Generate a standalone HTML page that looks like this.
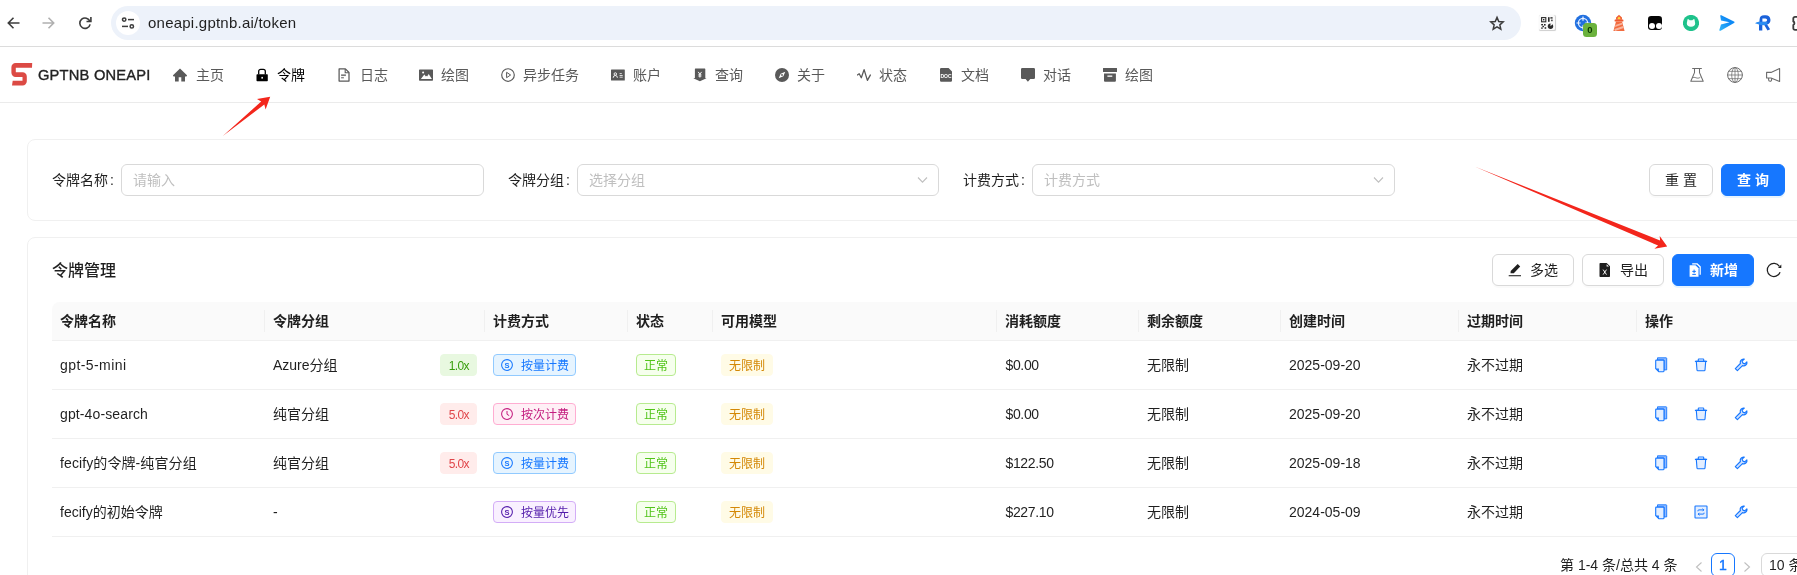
<!DOCTYPE html>
<html lang="zh-CN">
<head>
<meta charset="utf-8">
<title>令牌管理</title>
<style>
*{box-sizing:border-box}
html,body{margin:0;padding:0}
body{width:1797px;height:575px;overflow:hidden;position:relative;background:#fff;font-family:"Liberation Sans","Noto Sans CJK SC",sans-serif;font-size:14px;color:rgba(0,0,0,.88)}
.abs{position:absolute}
/* browser chrome */
#chrome{position:absolute;left:0;top:0;width:1797px;height:47px;background:#fff;border-bottom:1px solid #dcdcdc}
#omni{position:absolute;left:111px;top:6px;width:1410px;height:34px;border-radius:17px;background:#edf2fa}
#omni .site{position:absolute;left:5px;top:5px;width:24px;height:24px;border-radius:12px;background:#fff}
#omni .url{position:absolute;left:37px;top:0;line-height:34px;font-size:15px;letter-spacing:.23px;color:#1f1f1f;white-space:nowrap}
/* nav */
#nav{position:absolute;left:0;top:47px;width:1797px;height:56px;border-bottom:1px solid #ebebeb;background:#fff}
#brand{position:absolute;left:38px;top:0;line-height:56px;font-size:14.7px;font-weight:400;-webkit-text-stroke:.35px #222;color:#222;letter-spacing:.2px;white-space:nowrap}
.ni{position:absolute;top:0;height:56px;line-height:56px;font-size:14px;color:#595959;white-space:nowrap}
.ni.on{color:#000}
.nic{position:absolute;top:0;height:56px}
/* cards */
.card{position:absolute;left:27px;width:1800px;border:1px solid #f0f0f0;border-radius:8px;background:#fff}
.lbl{position:absolute;line-height:32px;top:164px;font-size:14px;color:rgba(0,0,0,.88);white-space:nowrap}
.inp{position:absolute;top:164px;height:32px;border:1px solid #d9d9d9;border-radius:6px;background:#fff;line-height:30px;padding-left:11px;color:#bfbfbf;font-size:14px;white-space:nowrap}
.btn{position:absolute;height:32px;border-radius:6px;border:1px solid #d9d9d9;background:#fff;line-height:30px;font-size:14px;color:rgba(0,0,0,.88);white-space:nowrap;box-shadow:0 2px 0 rgba(0,0,0,.02)}
.btn.pri{background:#1677ff;border-color:#1677ff;color:#fff;font-weight:700;box-shadow:0 2px 0 rgba(5,145,255,.1)}
/* table */
#thead{position:absolute;left:52px;top:302px;width:1760px;height:39px;background:#fafafa;border-bottom:1px solid #f0f0f0;border-top-left-radius:8px}
.th{position:absolute;top:302px;line-height:38px;font-weight:600;font-size:14px;color:rgba(0,0,0,.88);white-space:nowrap}
.sep{position:absolute;top:310px;width:1px;height:22px;background:#f0f0f0}
.rowline{position:absolute;left:52px;width:1760px;height:1px;background:#f0f0f0}
.td{position:absolute;line-height:22px;font-size:14px;color:rgba(0,0,0,.88);white-space:nowrap}
.tag{position:absolute;height:22px;line-height:22px;font-size:12px;border-radius:4px;border:1px solid;white-space:nowrap;padding:0 7px}
#root{position:absolute;left:0;top:0;width:1797px;height:575px;overflow:hidden;will-change:transform}
</style>
</head>
<body>
<div id="root">
<div id="chrome">
<svg class="abs" style="left:3.7px;top:13px" width="20" height="20" viewBox="0 0 20 20" ><path d="M15.5 10H4.5M9.5 4.8L4.3 10l5.2 5.2" fill="none" stroke="#3c3c3c" stroke-width="1.6"/></svg>
<svg class="abs" style="left:38px;top:13px" width="20" height="20" viewBox="0 0 20 20" ><path d="M4.5 10h11M10.5 4.8l5.2 5.2-5.2 5.2" fill="none" stroke="#b0b0b0" stroke-width="1.6"/></svg>
<svg class="abs" style="left:75px;top:13px" width="20" height="20" viewBox="0 0 20 20" ><path d="M14.9 8.4A5.2 5.2 0 1 0 15.1 11.3" fill="none" stroke="#3c3c3c" stroke-width="1.6"/><path d="M15.9 4.1V8.5H11.5" fill="none" stroke="#3c3c3c" stroke-width="1.6"/></svg>
<div id="omni"><div class="site"></div>
<svg class="abs" style="left:9px;top:9px" width="16" height="16" viewBox="0 0 16 16" ><g fill="none" stroke="#3c3c3c" stroke-width="1.5"><circle cx="4.2" cy="4.6" r="1.7"/><path d="M8 4.6h6"/><circle cx="11.8" cy="11.4" r="1.7"/><path d="M2 11.4h6"/></g></svg>
<div class="url">oneapi.gptnb.ai/token</div>
<svg class="abs" style="left:0px;top:0px" width="1410" height="34" viewBox="0 0 1410 34" ><path d="M1386.00 11.4 L1387.76 15.47 L1392.18 15.89 L1388.85 18.83 L1389.82 23.16 L1386.00 20.9 L1382.18 23.16 L1383.15 18.83 L1379.82 15.89 L1384.24 15.47z" fill="none" stroke="#3c3c3c" stroke-width="1.5" stroke-linejoin="miter"/></svg>
</div>
<div class="abs" style="left:1539px;top:15px;width:15.5px;height:15px;border-radius:1.5px;background:#fafafa;box-shadow:.3px .5px .8px #cfcfcf"></div>
<svg class="abs" style="left:1539px;top:15px" width="16" height="16" viewBox="0 0 16 16" ><g fill="none" stroke="#2a2a2a" stroke-width="1.1"><rect x="2.6" y="2.6" width="4.2" height="4.2"/></g><g fill="#2a2a2a"><rect x="4" y="4" width="1.4" height="1.4"/><rect x="9" y="2.2" width="1.6" height="4.6"/><rect x="11.4" y="2.2" width="2.2" height="1.4"/><rect x="12.2" y="4.6" width="1.4" height="1.6"/><rect x="2.2" y="9" width="1.8" height="1.4"/><rect x="5" y="9" width="1.6" height="1.6"/><rect x="3.4" y="10.8" width="1.6" height="1.4"/><rect x="2.2" y="12.4" width="1.5" height="1.4"/><rect x="5.6" y="12.2" width="1.6" height="1.6"/><circle cx="11.5" cy="11.3" r="2.7"/></g><path d="M11.5 11.3V8.3h3.2z" fill="#fafafa"/></svg>
<svg class="abs" style="left:1574px;top:14px" width="18" height="18" viewBox="0 0 18 18" ><circle cx="9" cy="9" r="8.2" fill="#2170e0"/><circle cx="9" cy="9" r="4.6" fill="none" stroke="#eaf2ff" stroke-width="1.2"/><path d="M9 2.5v4.2M9 11.3v4.2M2.5 9h4.2M11.3 9h4.2" stroke="#eaf2ff" stroke-width="1.2"/></svg>
<div class="abs" style="left:1583px;top:23px;width:14px;height:14px;border-radius:3.5px;background:#6bb23d;color:#0c3a00;font-size:9.5px;font-weight:700;line-height:14.5px;text-align:center">0</div>
<svg class="abs" style="left:1612px;top:14px" width="14" height="18" viewBox="0 0 14 18" ><path d="M4 3.6L7 .8l3 2.8v2.2H4z" fill="#f1653a"/><circle cx="7" cy="4.2" r="1.2" fill="#ffd83a"/><rect x="2.6" y="5.6" width="8.8" height="2" rx=".5" fill="#ee5a32"/><path d="M4 7.6h6L12.6 17H1.4z" fill="#f26b3f"/><path d="M3.5 10.9l6.4-2.1.5 1.8-7.4 2.5zM2.3 15l8.9-3 .6 1.9-8.8 3z" fill="#f8b39c"/></svg>
<div class="abs" style="left:1648px;top:16px;width:14px;height:14px;border-radius:3.2px;background:#050505"></div>
<div class="abs" style="left:1649.3px;top:23.4px;width:6px;height:6px;border-radius:3px;background:#fff"></div><div class="abs" style="left:1655.5px;top:23.4px;width:6px;height:6px;border-radius:3px;background:#fff"></div>
<svg class="abs" style="left:1683px;top:15px" width="16" height="16" viewBox="0 0 16 16" ><circle cx="8" cy="8" r="8.1" fill="#1ec28b"/><path d="M4.5 4.6q.2-.9 1-.3l1.2 1h2.6l1.2-1q.8-.6 1 .3l.7 3.7a4.2 3.4 0 0 1-8.4 0z" fill="#f4fffb"/></svg>
<svg class="abs" style="left:1719px;top:15px" width="16" height="16" viewBox="0 0 16 16" ><defs><linearGradient id="sg" x1="0" y1="1" x2="1" y2="0"><stop offset="0" stop-color="#34b8f8"/><stop offset=".6" stop-color="#0f8af5"/></linearGradient></defs><path d="M2.3.2L15 6.5q1 .7 0 1.5L1.6 15.7q-1.4.6-1.2-.9L2 9.4l8.6-2.1L2 5.6 1.3 1.2Q1.3-.2 2.3.2z" fill="url(#sg)"/></svg>
<svg class="abs" style="left:1755px;top:15px" width="17" height="16" viewBox="0 0 17 16" ><path d="M4.6 4.2A4.6 4.2 0 0 1 9.3.2h1.4a4.7 4.7 0 0 1 1.4 9.2l3 4.8-2.6 1.4-3.4-5.8H7.3V15.6H4V11" fill="#1a62da"/><path d="M7.4 3.4h3a1.7 1.7 0 0 1 0 3.4h-3z" fill="#fff"/><path d="M0 8.3q2-2 5-1.5l7.5.2-.5 2.8q-5 .8-8-.2z" fill="#2b8cf2"/></svg>
<svg class="abs" style="left:1791px;top:14px" width="10" height="18" viewBox="0 0 10 18" ><path d="M8 2.8H4a1.7 1.7 0 0 0-1.7 1.7V7.4a2 2 0 0 1 0 3.6v3.2A1.7 1.7 0 0 0 4 15.9H8" fill="none" stroke="#3c3c3c" stroke-width="1.8"/></svg>
</div>
<div id="nav">
<svg class="abs" style="left:11px;top:16px" width="22" height="23" viewBox="0 0 22 23" ><path d="M21.2 .1H4.6A4.2 4.2 0 0 0 .4 4.3V9.8a4.2 4.2 0 0 0 4.2 4.2H11.5V17.8H1.7L1 22.4H11.6a4.2 4.2 0 0 0 4.2-4.2V13.5a4.2 4.2 0 0 0-4.2-4.2H4.8V4.7H21z" fill="#dc4a44"/></svg>
<div id="brand">GPTNB ONEAPI</div>
<svg class="abs" style="left:173px;top:21px" width="14" height="14" viewBox="0 0 14 14" ><path d="M7 .4L.3 7a.8.8 0 0 0 .6 1.4H2v5.2h3.7V9.3h2.6v4.3H12V8.4h1.1a.8.8 0 0 0 .6-1.4z" fill="#595959"/></svg>
<div class="ni" style="left:196px">主页</div>
<svg class="abs" style="left:255px;top:21px" width="14" height="14" viewBox="0 0 14 14" ><path d="M3.7 6.6V3.3a2 2 0 0 1 2-2h2.6a2 2 0 0 1 2 2v3.3" fill="none" stroke="#000" stroke-width="1.3"/><rect x="1.5" y="6.3" width="11.3" height="6.9" rx=".7" fill="#000"/><rect x="6.4" y="8.9" width="1.5" height="1.7" fill="#fff"/></svg>
<div class="ni on" style="left:277px">令牌</div>
<svg class="abs" style="left:337px;top:21px" width="14" height="14" viewBox="0 0 14 14" ><path d="M2.1 .9h6.3L12 4.5v8.6H2.1z" fill="none" stroke="#595959" stroke-width="1.25" stroke-linejoin="round"/><path d="M8.2 1v3.7h3.7" fill="none" stroke="#595959" stroke-width="1.1"/><path d="M4.1 7.2h4.8" stroke="#7a7a7a" stroke-width="1.7"/><path d="M4.1 9.8h2.8" stroke="#595959" stroke-width="1"/></svg>
<div class="ni" style="left:360px">日志</div>
<svg class="abs" style="left:419px;top:21px" width="14" height="14" viewBox="0 0 14 14" ><rect x="0" y="1.4" width="14" height="11.3" rx=".7" fill="#595959"/><path d="M1.9 10.9l3.4-4.4 1.6 2 .6-.7.6.7 1.6-2.4 3.2 4.8z" fill="#fff"/><circle cx="4.1" cy="4.4" r="1" fill="#fff"/></svg>
<div class="ni" style="left:441px">绘图</div>
<svg class="abs" style="left:501px;top:21px" width="14" height="14" viewBox="0 0 14 14" ><circle cx="7" cy="7" r="6.3" fill="none" stroke="#595959" stroke-width="1.15"/><path d="M5.6 4.3L9.6 7l-4 2.7z" fill="none" stroke="#595959" stroke-width="1" stroke-linejoin="round"/></svg>
<div class="ni" style="left:523px">异步任务</div>
<svg class="abs" style="left:611px;top:21px" width="14" height="14" viewBox="0 0 14 14" ><rect x="0" y="1.6" width="13.8" height="10.9" rx=".5" fill="#595959"/><circle cx="4.3" cy="6" r="1.25" fill="none" stroke="#fff" stroke-width=".9"/><path d="M2.2 9.8a2.1 2.3 0 0 1 4.2 0" fill="none" stroke="#fff" stroke-width=".9"/><path d="M8.6 5.6h2.2M8.6 7.5h3.1M8.6 9.2h3.1" stroke="#fff" stroke-width=".8"/></svg>
<div class="ni" style="left:633px">账户</div>
<svg class="abs" style="left:693px;top:21px" width="14" height="14" viewBox="0 0 14 14" ><path d="M2.3 .6h9.6a.4.4 0 0 1 .4.4v9l1.2.2L6.9 13.2.3 10.2l1.6-.2v-9a.4.4 0 0 1 .4-.4z" fill="#595959"/><path d="M5.2 3.9l1.7 2.3 1.7-2.3M6.9 6.2v3.4M5.4 6.8h3M5.4 8.1h3" stroke="#fff" stroke-width=".95" fill="none"/></svg>
<div class="ni" style="left:715px">查询</div>
<svg class="abs" style="left:775px;top:21px" width="14" height="14" viewBox="0 0 14 14" ><circle cx="7" cy="7" r="7" fill="#595959"/><path d="M10.3 3.7L8.3 8.3 3.7 10.3 5.7 5.7z" fill="#fff"/><circle cx="7" cy="7" r=".9" fill="#595959"/></svg>
<div class="ni" style="left:797px">关于</div>
<svg class="abs" style="left:857px;top:21px" width="14" height="14" viewBox="0 0 14 14" ><path d="M0 7.2L2.2 5.8 4.3 9.7 7.1 1.6 10.4 12.4 13.6 6.6" fill="none" stroke="#595959" stroke-width="1.3" stroke-linejoin="round"/></svg>
<div class="ni" style="left:879px">状态</div>
<svg class="abs" style="left:940px;top:21px" width="12" height="14" viewBox="0 0 12 14" ><path d="M1.2 0h7.4L12 3.4V12.6a1.2 1.2 0 0 1-1.2 1.2H1.2A1.2 1.2 0 0 1 0 12.6V1.2A1.2 1.2 0 0 1 1.2 0z" fill="#595959"/><text x="6" y="9.7" font-size="5" font-weight="700" fill="#fff" text-anchor="middle" font-family="Liberation Sans,sans-serif">DOC</text></svg>
<div class="ni" style="left:961px">文档</div>
<svg class="abs" style="left:1021px;top:21px" width="14" height="14" viewBox="0 0 14 14" ><path d="M1.3 0h11.4a1.3 1.3 0 0 1 1.3 1.3v8.5a1.3 1.3 0 0 1-1.3 1.3H9.3L6.9 13.8 4.6 11.1H1.3A1.3 1.3 0 0 1 0 9.8v-8.5A1.3 1.3 0 0 1 1.3 0z" fill="#595959"/></svg>
<div class="ni" style="left:1043px">对话</div>
<svg class="abs" style="left:1103px;top:21px" width="14" height="14" viewBox="0 0 14 14" ><rect x="0" y="0" width="14" height="4.1" rx=".3" fill="#595959"/><path d="M1 5.5h11.9v7.3a1 1 0 0 1-1 1H2a1 1 0 0 1-1-1z" fill="#595959"/><rect x="4.4" y="7.5" width="4.9" height="1.3" fill="#fff"/></svg>
<div class="ni" style="left:1125px">绘图</div>
<svg class="abs" style="left:1689px;top:20px" width="16" height="16" viewBox="0 0 16 16" ><path d="M3.2 1.4h9.6M5.5 1.4v4.2L1.8 14.3h12.4L10.5 5.6V1.4" fill="none" stroke="#6b6b6b" stroke-width="1.05" stroke-linejoin="round"/><path d="M3.6 10.8c1.6-.9 2.9-.1 4.2.2s2.4.1 3.6-.9" fill="none" stroke="#6b6b6b" stroke-width=".9"/></svg>
<svg class="abs" style="left:1727px;top:20px" width="16" height="16" viewBox="0 0 16 16" ><g fill="none" stroke="#6b6b6b"><circle cx="8" cy="8" r="7.4" stroke-width="1"/><g stroke-width=".75"><ellipse cx="8" cy="8" rx="3.3" ry="7.4"/><path d="M8 .6v14.8M.6 8h14.8M1.7 4.3h12.6M1.7 11.7h12.6"/></g></g></svg>
<svg class="abs" style="left:1765px;top:20px" width="16" height="16" viewBox="0 0 16 16" ><path d="M14.6 1.5v13L6 11H1.6V5.4H6z" fill="none" stroke="#6b6b6b" stroke-width="1.1" stroke-linejoin="round"/><path d="M3.6 11v1.8a1.5 1.5 0 0 0 3 0V11.3" fill="none" stroke="#6b6b6b" stroke-width="1.1"/></svg>
</div>
<div class="card" style="top:139px;height:82px"></div>
<div class="lbl" style="left:52px">令牌名称<span style="margin-left:2px">:</span></div>
<div class="inp" style="left:121px;width:363px">请输入</div>
<div class="lbl" style="left:508px">令牌分组<span style="margin-left:2px">:</span></div>
<div class="inp" style="left:577px;width:362px">选择分组</div>
<svg class="abs" style="left:916.5px;top:176px" width="11" height="8" viewBox="0 0 11 8" ><path d="M1 1.5l4.5 4.7L10 1.5" fill="none" stroke="#bfbfbf" stroke-width="1.1"/></svg>
<div class="lbl" style="left:963px">计费方式<span style="margin-left:2px">:</span></div>
<div class="inp" style="left:1032px;width:363px">计费方式</div>
<svg class="abs" style="left:1372.5px;top:176px" width="11" height="8" viewBox="0 0 11 8" ><path d="M1 1.5l4.5 4.7L10 1.5" fill="none" stroke="#bfbfbf" stroke-width="1.1"/></svg>
<div class="btn" style="left:1649px;top:164px;width:64px;text-align:center">重 置</div>
<div class="btn pri" style="left:1721px;top:164px;width:64px;text-align:center">查 询</div>
<div class="card" style="top:237px;height:400px"></div>
<div class="abs" style="left:52px;top:255px;line-height:32px;font-size:16px;font-weight:500;color:rgba(0,0,0,.88);white-space:nowrap">令牌管理</div>
<div class="btn" style="left:1492px;top:254px;width:82px;padding-left:37px">多选</div>
<svg class="abs" style="left:1508px;top:263px" width="14" height="14" viewBox="0 0 14 14" ><path d="M9.7 1L12.2 3.5 5.8 10.2H2.5L2.7 7.9z" fill="#1f1f1f"/><rect x=".7" y="12.2" width="12.3" height="1.05" fill="#1f1f1f"/></svg>
<div class="btn" style="left:1582px;top:254px;width:82px;padding-left:37px">导出</div>
<svg class="abs" style="left:1598px;top:263px" width="14" height="14" viewBox="0 0 14 14" ><path d="M2.3 0h6.4L12 3.3v9.9a.8.8 0 0 1-.8.8H2.3a.8.8 0 0 1-.8-.8V.8a.8.8 0 0 1 .8-.8z" fill="#1f1f1f"/><path d="M8.6 1.2v2.4h2.4z" fill="#fff"/><path d="M5.1 6.6l3.4 5M8.5 6.6l-3.4 5" stroke="#fff" stroke-width=".95"/></svg>
<div class="btn pri" style="left:1672px;top:254px;width:82px;padding-left:37px">新增</div>
<svg class="abs" style="left:1688px;top:263px" width="14" height="14" viewBox="0 0 14 14" ><path d="M4.2 .3h5.2l3.4 3.2v8.3h-1.2V4.2L8.8 1.5H4.2z" fill="#fff"/><path d="M1.6 2.3h5.9l3 3v8.4H1.6z" fill="#fff"/><path d="M4.3 8.4h3.6M6.1 6.6v3.6M4.3 11.4h3.6" stroke="#1677ff" stroke-width="1"/></svg>
<svg class="abs" style="left:1766px;top:262px" width="16" height="16" viewBox="0 0 16 16" ><path d="M13.4 4.3A6.6 6.6 0 1 0 14.1 10.2" fill="none" stroke="#1f1f1f" stroke-width="1.25"/><path d="M15.3 2.5V6H12z" fill="#1f1f1f"/></svg>
<div id="thead"></div>
<div class="th" style="left:60px">令牌名称</div>
<div class="th" style="left:273px">令牌分组</div>
<div class="sep" style="left:264px"></div>
<div class="th" style="left:493px">计费方式</div>
<div class="sep" style="left:484px"></div>
<div class="th" style="left:636px">状态</div>
<div class="sep" style="left:627px"></div>
<div class="th" style="left:721px">可用模型</div>
<div class="sep" style="left:712px"></div>
<div class="th" style="left:1005px">消耗额度</div>
<div class="sep" style="left:996px"></div>
<div class="th" style="left:1147px">剩余额度</div>
<div class="sep" style="left:1138px"></div>
<div class="th" style="left:1289px">创建时间</div>
<div class="sep" style="left:1280px"></div>
<div class="th" style="left:1467px">过期时间</div>
<div class="sep" style="left:1458px"></div>
<div class="th" style="left:1645px">操作</div>
<div class="sep" style="left:1636px"></div>
<div class="td" style="left:60px;top:354px;letter-spacing:.42px">gpt-5-mini</div>
<div class="td" style="left:273px;top:354px">Azure分组</div>
<div class="tag" style="left:440px;top:354px;width:37px;padding:0 0 0 .6px;letter-spacing:-.6px;text-align:center;color:#389e0d;background:#e8f8e0;border-color:#e8f8e0">1.0x</div>
<div class="tag" style="left:493px;top:354px;width:83px;padding-left:27px;color:#1677ff;background:#e6f4ff;border-color:#91caff">按量计费</div>
<svg class="abs" style="left:501px;top:359px" width="12" height="12" viewBox="0 0 12 12" ><circle cx="6" cy="6" r="5.4" fill="none" stroke="#1677ff" stroke-width="1.05"/><text x="6" y="8.6" font-size="7.5" font-weight="700" text-anchor="middle" fill="#1677ff" font-family="Liberation Sans,sans-serif">S</text></svg>
<div class="tag" style="left:636px;top:354px;width:40px;padding:0;text-align:center;color:#52c41a;background:#f6ffed;border-color:#b7eb8f">正常</div>
<div class="tag" style="left:721px;top:354px;width:52px;padding:0;text-align:center;color:#d48806;background:#fffbe6;border-color:#fffbe6">无限制</div>
<div class="td" style="left:1005.5px;top:354px;letter-spacing:-.35px">$0.00</div>
<div class="td" style="left:1147px;top:354px">无限制</div>
<div class="td" style="left:1289px;top:354px">2025-09-20</div>
<div class="td" style="left:1467px;top:354px">永不过期</div>
<svg class="abs" style="left:1654px;top:357.3px" width="14" height="16" viewBox="0 0 14 16" ><path d="M3.5 .8H12.1a.6.6 0 0 1 .6.6V12.9H10V3.1H3.5z" fill="#8fbaff" stroke="#1677ff" stroke-width=".9" stroke-linejoin="round"/><path d="M2.3 3.1H9.4a.6.6 0 0 1 .6.6V14.1a.6.6 0 0 1-.6.6H4.7L1.7 11.7V3.7a.6.6 0 0 1 .6-.6z" fill="#e3eeff" stroke="#1677ff" stroke-width="1.1" stroke-linejoin="round"/><path d="M1.9 11.5H4.9V14.5z" fill="#1677ff"/></svg>
<svg class="abs" style="left:1694px;top:358.2px" width="14" height="14" viewBox="0 0 14 14" ><path d="M2.3 3.4l.7 8.6a.8.8 0 0 0 .8.7h6.4a.8.8 0 0 0 .8-.7l.7-8.6z" fill="#e3eeff" stroke="#1677ff" stroke-width="1.1" stroke-linejoin="round"/><path d="M.9 3.4h12.2M4.3 3.2V1.5a.5.5 0 0 1 .5-.5h4.4a.5.5 0 0 1 .5.5v1.7" fill="none" stroke="#1677ff" stroke-width="1.1"/></svg>
<svg class="abs" style="left:1734px;top:358.4px" width="14" height="14" viewBox="0 0 14 14" ><path d="M9.8 1.1a3.3 3.3 0 0 0-3.4 4.4L1.3 10.6l2.1 2.1L8.5 7.6a3.3 3.3 0 0 0 4.4-3.8L10.8 5.9 8.9 5.1 8.1 3.2 10.3 1.1z" fill="#cfe1ff" stroke="#1677ff" stroke-width="1.15" stroke-linejoin="round"/></svg>
<div class="rowline" style="top:389px"></div>
<div class="td" style="left:60px;top:403px;letter-spacing:.12px">gpt-4o-search</div>
<div class="td" style="left:273px;top:403px">纯官分组</div>
<div class="tag" style="left:440px;top:403px;width:37px;padding:0 0 0 .6px;letter-spacing:-.6px;text-align:center;color:#e0454a;background:#ffeceb;border-color:#ffeceb">5.0x</div>
<div class="tag" style="left:493px;top:403px;width:83px;padding-left:27px;color:#c41d7f;background:#fff0f6;border-color:#ffadd2">按次计费</div>
<svg class="abs" style="left:501px;top:408px" width="12" height="12" viewBox="0 0 12 12" ><circle cx="6" cy="6" r="5.4" fill="none" stroke="#c41d7f" stroke-width="1.05"/><path d="M6 3v3.3l2.2 1.3" fill="none" stroke="#c41d7f" stroke-width="1"/></svg>
<div class="tag" style="left:636px;top:403px;width:40px;padding:0;text-align:center;color:#52c41a;background:#f6ffed;border-color:#b7eb8f">正常</div>
<div class="tag" style="left:721px;top:403px;width:52px;padding:0;text-align:center;color:#d48806;background:#fffbe6;border-color:#fffbe6">无限制</div>
<div class="td" style="left:1005.5px;top:403px;letter-spacing:-.35px">$0.00</div>
<div class="td" style="left:1147px;top:403px">无限制</div>
<div class="td" style="left:1289px;top:403px">2025-09-20</div>
<div class="td" style="left:1467px;top:403px">永不过期</div>
<svg class="abs" style="left:1654px;top:406.3px" width="14" height="16" viewBox="0 0 14 16" ><path d="M3.5 .8H12.1a.6.6 0 0 1 .6.6V12.9H10V3.1H3.5z" fill="#8fbaff" stroke="#1677ff" stroke-width=".9" stroke-linejoin="round"/><path d="M2.3 3.1H9.4a.6.6 0 0 1 .6.6V14.1a.6.6 0 0 1-.6.6H4.7L1.7 11.7V3.7a.6.6 0 0 1 .6-.6z" fill="#e3eeff" stroke="#1677ff" stroke-width="1.1" stroke-linejoin="round"/><path d="M1.9 11.5H4.9V14.5z" fill="#1677ff"/></svg>
<svg class="abs" style="left:1694px;top:407.2px" width="14" height="14" viewBox="0 0 14 14" ><path d="M2.3 3.4l.7 8.6a.8.8 0 0 0 .8.7h6.4a.8.8 0 0 0 .8-.7l.7-8.6z" fill="#e3eeff" stroke="#1677ff" stroke-width="1.1" stroke-linejoin="round"/><path d="M.9 3.4h12.2M4.3 3.2V1.5a.5.5 0 0 1 .5-.5h4.4a.5.5 0 0 1 .5.5v1.7" fill="none" stroke="#1677ff" stroke-width="1.1"/></svg>
<svg class="abs" style="left:1734px;top:407.4px" width="14" height="14" viewBox="0 0 14 14" ><path d="M9.8 1.1a3.3 3.3 0 0 0-3.4 4.4L1.3 10.6l2.1 2.1L8.5 7.6a3.3 3.3 0 0 0 4.4-3.8L10.8 5.9 8.9 5.1 8.1 3.2 10.3 1.1z" fill="#cfe1ff" stroke="#1677ff" stroke-width="1.15" stroke-linejoin="round"/></svg>
<div class="rowline" style="top:438px"></div>
<div class="td" style="left:60px;top:452px;letter-spacing:.1px">fecify的令牌-纯官分组</div>
<div class="td" style="left:273px;top:452px">纯官分组</div>
<div class="tag" style="left:440px;top:452px;width:37px;padding:0 0 0 .6px;letter-spacing:-.6px;text-align:center;color:#e0454a;background:#ffeceb;border-color:#ffeceb">5.0x</div>
<div class="tag" style="left:493px;top:452px;width:83px;padding-left:27px;color:#1677ff;background:#e6f4ff;border-color:#91caff">按量计费</div>
<svg class="abs" style="left:501px;top:457px" width="12" height="12" viewBox="0 0 12 12" ><circle cx="6" cy="6" r="5.4" fill="none" stroke="#1677ff" stroke-width="1.05"/><text x="6" y="8.6" font-size="7.5" font-weight="700" text-anchor="middle" fill="#1677ff" font-family="Liberation Sans,sans-serif">S</text></svg>
<div class="tag" style="left:636px;top:452px;width:40px;padding:0;text-align:center;color:#52c41a;background:#f6ffed;border-color:#b7eb8f">正常</div>
<div class="tag" style="left:721px;top:452px;width:52px;padding:0;text-align:center;color:#d48806;background:#fffbe6;border-color:#fffbe6">无限制</div>
<div class="td" style="left:1005.5px;top:452px;letter-spacing:-.35px">$122.50</div>
<div class="td" style="left:1147px;top:452px">无限制</div>
<div class="td" style="left:1289px;top:452px">2025-09-18</div>
<div class="td" style="left:1467px;top:452px">永不过期</div>
<svg class="abs" style="left:1654px;top:455.3px" width="14" height="16" viewBox="0 0 14 16" ><path d="M3.5 .8H12.1a.6.6 0 0 1 .6.6V12.9H10V3.1H3.5z" fill="#8fbaff" stroke="#1677ff" stroke-width=".9" stroke-linejoin="round"/><path d="M2.3 3.1H9.4a.6.6 0 0 1 .6.6V14.1a.6.6 0 0 1-.6.6H4.7L1.7 11.7V3.7a.6.6 0 0 1 .6-.6z" fill="#e3eeff" stroke="#1677ff" stroke-width="1.1" stroke-linejoin="round"/><path d="M1.9 11.5H4.9V14.5z" fill="#1677ff"/></svg>
<svg class="abs" style="left:1694px;top:456.2px" width="14" height="14" viewBox="0 0 14 14" ><path d="M2.3 3.4l.7 8.6a.8.8 0 0 0 .8.7h6.4a.8.8 0 0 0 .8-.7l.7-8.6z" fill="#e3eeff" stroke="#1677ff" stroke-width="1.1" stroke-linejoin="round"/><path d="M.9 3.4h12.2M4.3 3.2V1.5a.5.5 0 0 1 .5-.5h4.4a.5.5 0 0 1 .5.5v1.7" fill="none" stroke="#1677ff" stroke-width="1.1"/></svg>
<svg class="abs" style="left:1734px;top:456.4px" width="14" height="14" viewBox="0 0 14 14" ><path d="M9.8 1.1a3.3 3.3 0 0 0-3.4 4.4L1.3 10.6l2.1 2.1L8.5 7.6a3.3 3.3 0 0 0 4.4-3.8L10.8 5.9 8.9 5.1 8.1 3.2 10.3 1.1z" fill="#cfe1ff" stroke="#1677ff" stroke-width="1.15" stroke-linejoin="round"/></svg>
<div class="rowline" style="top:487px"></div>
<div class="td" style="left:60px;top:501px">fecify的初始令牌</div>
<div class="td" style="left:273px;top:501px">-</div>
<div class="tag" style="left:493px;top:501px;width:83px;padding-left:27px;color:#531dab;background:#f9f0ff;border-color:#d3adf7">按量优先</div>
<svg class="abs" style="left:501px;top:506px" width="12" height="12" viewBox="0 0 12 12" ><circle cx="6" cy="6" r="5.4" fill="none" stroke="#531dab" stroke-width="1.05"/><text x="6" y="8.6" font-size="7.5" font-weight="700" text-anchor="middle" fill="#531dab" font-family="Liberation Sans,sans-serif">S</text></svg>
<div class="tag" style="left:636px;top:501px;width:40px;padding:0;text-align:center;color:#52c41a;background:#f6ffed;border-color:#b7eb8f">正常</div>
<div class="tag" style="left:721px;top:501px;width:52px;padding:0;text-align:center;color:#d48806;background:#fffbe6;border-color:#fffbe6">无限制</div>
<div class="td" style="left:1005.5px;top:501px;letter-spacing:-.35px">$227.10</div>
<div class="td" style="left:1147px;top:501px">无限制</div>
<div class="td" style="left:1289px;top:501px">2024-05-09</div>
<div class="td" style="left:1467px;top:501px">永不过期</div>
<svg class="abs" style="left:1654px;top:504.3px" width="14" height="16" viewBox="0 0 14 16" ><path d="M3.5 .8H12.1a.6.6 0 0 1 .6.6V12.9H10V3.1H3.5z" fill="#8fbaff" stroke="#1677ff" stroke-width=".9" stroke-linejoin="round"/><path d="M2.3 3.1H9.4a.6.6 0 0 1 .6.6V14.1a.6.6 0 0 1-.6.6H4.7L1.7 11.7V3.7a.6.6 0 0 1 .6-.6z" fill="#e3eeff" stroke="#1677ff" stroke-width="1.1" stroke-linejoin="round"/><path d="M1.9 11.5H4.9V14.5z" fill="#1677ff"/></svg>
<svg class="abs" style="left:1694px;top:505.2px" width="14" height="14" viewBox="0 0 14 14" ><rect x="1" y="1" width="12" height="12" rx=".5" fill="#e3eeff" stroke="#1677ff" stroke-width="1.1"/><path d="M3.9 6.3V5.9a1 1 0 0 1 1-1h4.7M8.6 3.6l1.3 1.3-1.3 1.3M10.1 7.7v.4a1 1 0 0 1-1 1H4.4M5.4 7.8L4.1 9.1l1.3 1.3" fill="none" stroke="#1677ff" stroke-width="1"/></svg>
<svg class="abs" style="left:1734px;top:505.4px" width="14" height="14" viewBox="0 0 14 14" ><path d="M9.8 1.1a3.3 3.3 0 0 0-3.4 4.4L1.3 10.6l2.1 2.1L8.5 7.6a3.3 3.3 0 0 0 4.4-3.8L10.8 5.9 8.9 5.1 8.1 3.2 10.3 1.1z" fill="#cfe1ff" stroke="#1677ff" stroke-width="1.15" stroke-linejoin="round"/></svg>
<div class="rowline" style="top:536px"></div>
<div class="td" style="left:1560px;top:554px">第 1-4 条/总共 4 条</div>
<svg class="abs" style="left:1694.3px;top:560.7px" width="10" height="12" viewBox="0 0 10 12" ><path d="M7.5 1.5L2.5 6l5 4.5" fill="none" stroke="#bfbfbf" stroke-width="1.1"/></svg>
<div class="abs" style="left:1711px;top:553px;width:24px;height:24px;border:1px solid #1677ff;border-radius:6px;line-height:22px;text-align:center;color:#1677ff;font-weight:400;-webkit-text-stroke:.45px #1677ff;font-size:14px">1</div>
<svg class="abs" style="left:1742.3px;top:560.7px" width="10" height="12" viewBox="0 0 10 12" ><path d="M2.5 1.5l5 4.5-5 4.5" fill="none" stroke="#bfbfbf" stroke-width="1.1"/></svg>
<div class="abs" style="left:1761px;top:553px;width:100px;height:24px;border:1px solid #d9d9d9;border-radius:6px;line-height:22px;padding-left:7px;font-size:14px;color:rgba(0,0,0,.88);white-space:nowrap">10 条/页</div>
<svg class="abs" style="left:0;top:0" width="1797" height="575" viewBox="0 0 1797 575"><g fill="#f3261c"><path d="M222.8 136L261.2 101.4 257 99.1 270.2 96.8 265.6 109.5 264.3 104.4z"/><path d="M1474.6 166.4L1660.1 240.5 1659.7 236 1667.2 246.5 1654.4 248.8 1658.1 245.6z"/></g></svg>
</div>
</body>
</html>
